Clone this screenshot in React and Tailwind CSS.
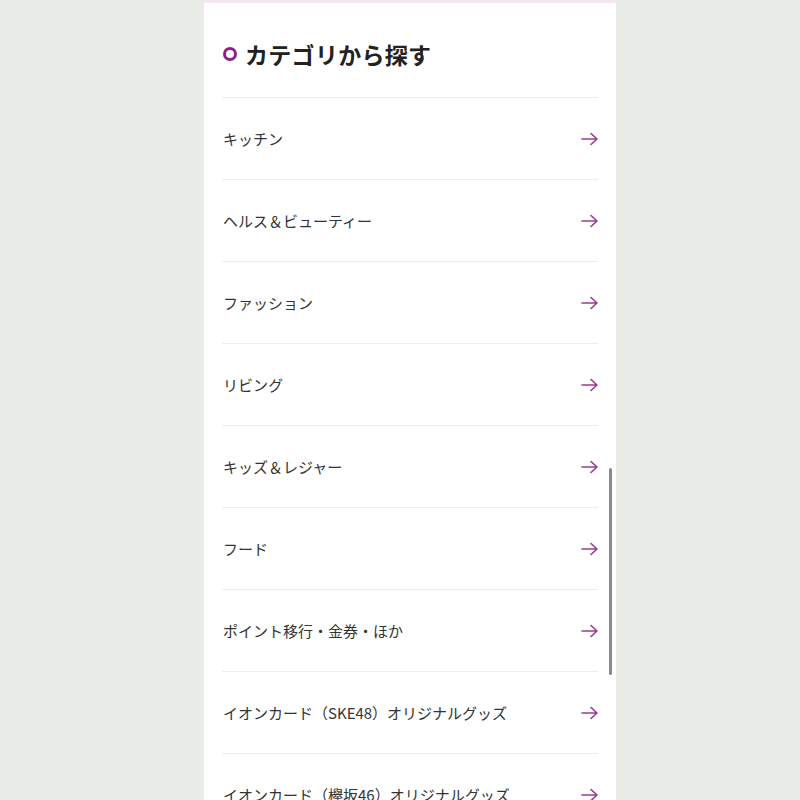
export default function App() {
  const items = [
    "キッチン",
    "ヘルス＆ビューティー",
    "ファッション",
    "リビング",
    "キッズ＆レジャー",
    "フード",
    "ポイント移行・金券・ほか",
    "イオンカード（SKE48）オリジナルグッズ",
    "イオンカード（欅坂46）オリジナルグッズ",
  ];
  return (
    <div
      className="w-[800px] h-[800px] overflow-hidden bg-[#e9ebe7] flex"
      style={{ fontFamily: '"Noto Sans CJK JP", "Noto Sans", sans-serif' }}
    >
      <div className="relative w-[412px] ml-[204px] h-full bg-white border-t-[3px] border-[#f3e6f1]">
        <div className="px-[18px]">
          <div className="h-[94px] flex items-center gap-[8px] pl-[1px] pt-[8px]">
            <span className="w-[14px] h-[14px] rounded-full border-[3px] border-[#8e2180] shrink-0" />
            <h2 className="text-[23px] font-bold text-[#222] leading-none tracking-[0.3px]">
              カテゴリから探す
            </h2>
          </div>
          {items.map((t) => (
            <div
              key={t}
              className="h-[82px] border-t border-[#ececec] flex items-center justify-between pl-[1px]"
            >
              <span className="text-[15px] text-[#333] leading-none">{t}</span>
              <svg width="18" height="14" viewBox="0 0 18 14" className="mr-[-1px]">
                <path
                  d="M1 7H16M10 1.5L16 7L10 12.5"
                  fill="none"
                  stroke="#9a3a8e"
                  strokeWidth="1.6"
                  strokeLinecap="round"
                  strokeLinejoin="round"
                />
              </svg>
            </div>
          ))}
        </div>
        <div className="absolute right-[4px] top-[465px] w-[3px] h-[207px] rounded-full bg-[#8a8a8a]" />
      </div>
    </div>
  );
}
